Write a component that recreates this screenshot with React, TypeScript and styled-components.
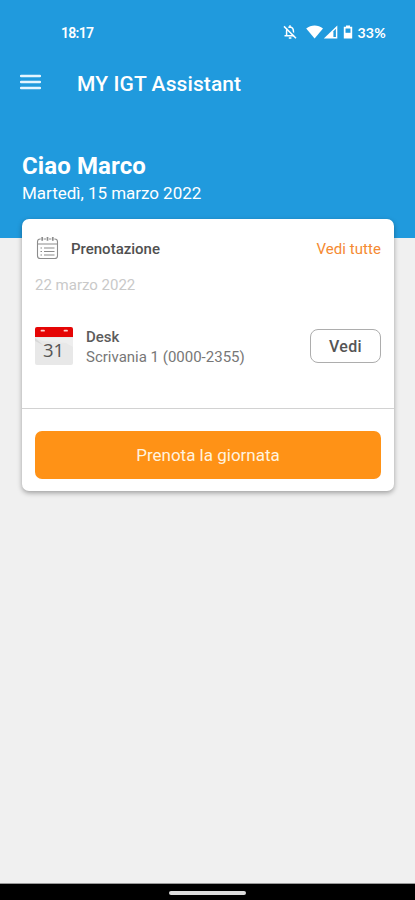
import React from "react";
import styled, { createGlobalStyle } from "styled-components";

const GlobalStyle = createGlobalStyle`
  * { box-sizing: border-box; }
  body { margin: 0; background: #f0f0f0; font-family: Roboto, sans-serif; }
  button { font-family: inherit; padding: 0; cursor: pointer; }
`;

const Screen = styled.div`
  display: flex;
  flex-direction: column;
  width: 415px;
  height: 900px;
  overflow: hidden;
  background: #f0f0f0;
`;

const Header = styled.header`
  flex: none;
  height: 238px;
  background: #209add;
  color: #fff;
`;

const StatusBar = styled.div`
  display: flex;
  justify-content: space-between;
  align-items: center;
  height: 64px;
  padding: 0 29px 0 61px;
`;

const Clock = styled.span`
  margin-top: 1px;
  font: 600 14px/20px Roboto, sans-serif;
  letter-spacing: -0.7px;
`;

const StatusIcons = styled.div`
  display: flex;
  align-items: center;
`;

const Battery = styled.span`
  margin: 1px 0 0 3px;
  font: 700 14px/20px Lato, Roboto, sans-serif;
  letter-spacing: 0.3px;
`;

const AppBar = styled.div`
  display: flex;
  align-items: center;
  height: 38px;
  padding-left: 20px;
`;

const MenuButton = styled.button`
  display: flex;
  width: 57px;
  margin-top: -2px;
  border: 0;
  background: none;
`;

const Title = styled.h1`
  margin: 2px 0 0;
  font: 500 21px/26px Roboto, sans-serif;
  letter-spacing: 0.1px;
`;

const Greeting = styled.div`
  padding: 49px 22px 0;
`;

const Hello = styled.h2`
  margin: 0;
  font: 700 24px/30px Roboto, sans-serif;
  letter-spacing: 0.1px;
`;

const Today = styled.p`
  margin: 1px 0 0;
  font: 400 17px/22px Roboto, sans-serif;
  letter-spacing: -0.03px;
`;

const Main = styled.main`
  flex: 1;
  padding: 0 21px 0 22px;
`;

const Card = styled.section`
  height: 272px;
  margin-top: -19px;
  border-radius: 7px;
  background: #fff;
  box-shadow: 0 2px 5px rgba(0, 0, 0, 0.34);
`;

const CardHeader = styled.div`
  display: flex;
  align-items: center;
  height: 58px;
  padding: 0 13px 0 14px;
`;

const CardTitle = styled.h3`
  flex: 1;
  margin: 1px 0 0 12px;
  color: #505050;
  font: 500 15px/20px Roboto, sans-serif;
`;

const TextLink = styled.a`
  margin-top: 1px;
  color: #f58a32;
  font: 400 15px/20px Roboto, sans-serif;
  letter-spacing: 0.05px;
`;

const BookingDate = styled.p`
  margin: -2px 0 0 13px;
  color: #c9c9c9;
  font: 400 15px/20px Roboto, sans-serif;
`;

const Booking = styled.div`
  display: flex;
  align-items: center;
  height: 42px;
  margin-top: 30px;
  padding: 0 13px;
`;

const BookingText = styled.div`
  flex: 1;
  margin: 1px 0 0 13px;
`;

const Place = styled.div`
  color: #5c5c5c;
  font: 500 15px/20px Roboto, sans-serif;
`;

const Detail = styled.div`
  color: #777;
  font: 400 15px/20px Roboto, sans-serif;
`;

const OutlineButton = styled.button`
  width: 71px;
  height: 34px;
  border: 1px solid #adadad;
  border-radius: 8px;
  background: #fff;
  color: #555;
  font-size: 16px;
  font-weight: 500;
  letter-spacing: 0.3px;
`;

const CardFooter = styled.div`
  margin-top: 41px;
  padding: 22px 13px 0;
  border-top: 1px solid #d2d2d2;
`;

const PrimaryButton = styled.button`
  display: block;
  width: 100%;
  height: 48px;
  border: 0;
  border-radius: 7px;
  background: #ff9216;
  color: #fff2df;
  font-size: 17px;
  font-weight: 400;
`;

const NavigationBar = styled.footer`
  display: flex;
  justify-content: center;
  flex: none;
  height: 17px;
  padding-top: 7px;
  border-top: 1px solid #999;
  background: #000;
`;

const HomeHandle = styled.div`
  width: 77px;
  height: 4px;
  border-radius: 2px;
  background: #ddd;
`;

const StatusGlyphs = () => (
  <svg width="72" height="18" viewBox="0 0 72 18" fill="none">
    <path d="M2.5 12.7h11M4.6 12.5V8c0-2.4 1.3-3.7 3.4-4 2.2.3 3.4 1.6 3.4 4v4.5M8 2.3v1.6M6.8 14.9h2.6" stroke="#fff" strokeWidth="1.5" />
    <path d="M3 2.4l12.2 12" stroke="#209add" strokeWidth="1.6" />
    <path d="M2 3.4l12 11.8" stroke="#fff" strokeWidth="1.5" />
    <path d="M24.2 5.6c4.8-4 12-4 16.8 0L32.6 15.4z" fill="#fff" />
    <path d="M55.3 2.6V15.4H41.8z" fill="#fff" />
    <path d="M51.4 8.2L53.9 5.8v8.2h-2.5z" fill="#209add" />
    <path d="M64 2.4h4v1.4h2.2V15.6h-8.4V3.8H64z" fill="#fff" />
    <path d="M63.5 5.5h5v4.3h-5z" fill="#209add" />
  </svg>
);

const MenuGlyph = () => (
  <svg width="21" height="16" viewBox="0 0 21 16">
    <path d="M1 2h19M1 8h19M1 14h19" stroke="#e4f5ff" strokeWidth="2.4" strokeLinecap="round" />
  </svg>
);

const ScheduleGlyph = () => (
  <svg width="23" height="24" viewBox="0 0 23 24" fill="none" stroke="#8c8c8c" strokeWidth="1.1">
    <rect x="1.5" y="3" width="20" height="19.5" rx="2.8" />
    <path d="M1.5 8h20M8 12h10.5M8 15.5h10.5M8 19h10.5" />
    <path d="M4.5 12H6M4.5 15.5H6M4.5 19H6" />
    <path d="M6.2 1v4M11.5 1v4M16.8 1v4" stroke="#fff" strokeWidth="3" />
    <path d="M6.2 1v3.8M11.5 1v3.8M16.8 1v3.8" strokeWidth="1.7" />
  </svg>
);

const CalendarTile = () => (
  <svg width="38" height="40" viewBox="0 0 38 40">
    <path d="M0 10h38v27a2 2 0 0 1-2 2H2a2 2 0 0 1-2-2z" fill="#e8e8e8" />
    <path d="M0 12h38v9L31 17 8 15z" fill="#eeeeee" />
    <path d="M0 12l8 7L0 15z" fill="#d8d8d8" />
    <path d="M2 1h34a2 2 0 0 1 2 2v8H0V3a2 2 0 0 1 2-2z" fill="#e50505" />
    <path d="M6.5 4.7h2.5M29.5 4.7H32" stroke="#ffd4cf" strokeWidth="1.8" strokeLinecap="round" />
    <text x="18.5" y="31" textAnchor="middle" fontFamily="Open Sans, sans-serif" fontSize="18.5" fill="#555">31</text>
  </svg>
);

export default function App() {
  return (
    <>
      <GlobalStyle />
      <Screen>
        <Header>
          <StatusBar>
            <Clock>18:17</Clock>
            <StatusIcons>
              <StatusGlyphs />
              <Battery>33%</Battery>
            </StatusIcons>
          </StatusBar>
          <AppBar>
            <MenuButton aria-label="Menu"><MenuGlyph /></MenuButton>
            <Title>MY IGT Assistant</Title>
          </AppBar>
          <Greeting>
            <Hello>Ciao Marco</Hello>
            <Today>Martedì, 15 marzo 2022</Today>
          </Greeting>
        </Header>
        <Main>
          <Card>
            <CardHeader>
              <ScheduleGlyph />
              <CardTitle>Prenotazione</CardTitle>
              <TextLink>Vedi tutte</TextLink>
            </CardHeader>
            <BookingDate>22 marzo 2022</BookingDate>
            <Booking>
              <CalendarTile />
              <BookingText>
                <Place>Desk</Place>
                <Detail>Scrivania 1 (0000-2355)</Detail>
              </BookingText>
              <OutlineButton>Vedi</OutlineButton>
            </Booking>
            <CardFooter>
              <PrimaryButton>Prenota la giornata</PrimaryButton>
            </CardFooter>
          </Card>
        </Main>
        <NavigationBar><HomeHandle /></NavigationBar>
      </Screen>
    </>
  );
}
